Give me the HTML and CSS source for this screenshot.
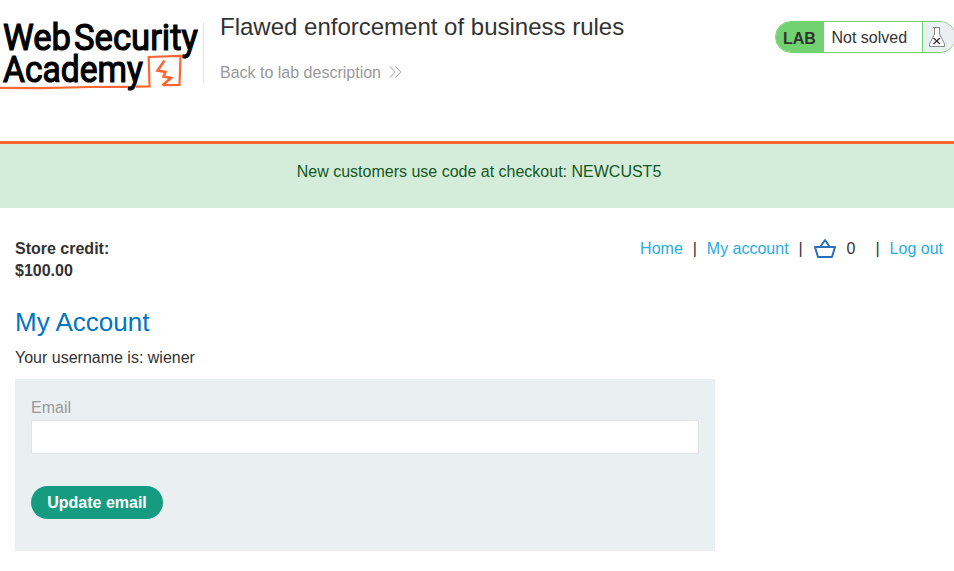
FILE: index.html
```html
<!DOCTYPE html>
<html lang="en">
<head>
<meta charset="utf-8">
<title>Flawed enforcement of business rules</title>
<link rel="stylesheet" href="styles.css">
</head>
<body>
<header class="lab-header">
  <svg class="logo" width="200" height="94" viewBox="0 0 200 94">
    <g class="logo-text">
      <text x="3" y="49.500" textLength="68" lengthAdjust="spacingAndGlyphs">Web</text>
      <text x="74" y="49.500" textLength="124" lengthAdjust="spacingAndGlyphs">Security</text>
      <text x="3" y="81.800" textLength="140" lengthAdjust="spacingAndGlyphs">Academy</text>
    </g>
    <g fill="none" stroke="#ff6633" stroke-width="2.200">
      <path d="M0 87.800 L40 88.200 L90 87 L128 86.800M136 86.600 L149.500 86.300 L148.700 57 L180.500 56 L179.500 84.800 L162.500 85.200"/>
      <path d="M164.500 60.500 L157.500 70.500 L165.500 72 L163.500 76.500 L171 78 L162.500 85.200" stroke-width="2.600"/>
    </g>
  </svg>
  <div class="title">
    <h2>Flawed enforcement of business rules</h2>
    <a class="back">Back to lab description
      <svg width="13" height="12" viewBox="0 0 13 12" fill="none" stroke="#999"><path d="M1 .5 6.2 6 1 11.5M6.500 .5 11.700 6 6.500 11.500"/></svg>
    </a>
  </div>
  <div class="status">
    <span class="lab">LAB</span>
    <p>Not solved</p>
    <span class="flask"><svg width="18" height="22" viewBox="0 0 18 22" fill="none"><path d="M5 1.500h7M6.500 2v6L1.500 18v2.500h15V18L11.500 8V2" fill="#fff" stroke="#888"/><path d="M5.500 12 12 18M12 12 5.500 18" stroke="#333" stroke-width="1.300"/></svg></span>
  </div>
</header>
<div class="banner">New customers use code at checkout: NEWCUST5</div>
<main>
  <div class="navigation">
    <strong>Store credit:<br>$100.00</strong>
    <nav>
      <a>Home</a><span>|</span><a>My account</a><span>|</span>
      <svg class="basket" width="24" height="22" viewBox="0 0 24 22" fill="none" stroke="#2b71b8" stroke-width="2"><path d="M2 9h20l-3 10H5zM7.500 8.500l4.500-6.500 4.500 6.500" stroke-linejoin="round"/></svg>
      <b>0</b><span>|</span><a>Log out</a>
    </nav>
  </div>
  <h1>My Account</h1>
  <p class="user">Your username is: wiener</p>
  <form class="account">
    <label for="email">Email</label>
    <input id="email" type="email">
    <button type="button">Update email</button>
  </form>
</main>
</body>
</html>
```
FILE: styles.css
```css
* { box-sizing: border-box; }
body {
  margin: 0;
  overflow: hidden;
  background: #fff;
  color: #333332;
  font: 16px/22px "Liberation Sans", Arial, sans-serif;
}
h1, h2, p { margin: 0; font-weight: 400; }
.lab-header {
  display: flex;
  align-items: flex-start;
  height: 144px;
  border-bottom: 3px solid #ff6633;
}
.logo { flex: none; overflow: visible; }
.logo-text {
  fill: #000;
  stroke: #000;
  stroke-width: 1.2px;
  font: 400 37px Roboto, sans-serif;
}
.title {
  flex: 1;
  height: 61px;
  margin: 22px 0 0 3px;
  padding-left: 16px;
  border-left: 1px solid #e2e2e2;
}
.title h2 { margin-top: -11px; font-size: 24px; line-height: 32px; }
.back {
  display: flex;
  align-items: center;
  gap: 8px;
  margin-top: 19px;
  color: #999;
}
.back svg { margin-top: -2px; }
.status {
  display: flex;
  flex: none;
  width: 181px;
  height: 32px;
  margin: 21px -2px 0 0;
  overflow: hidden;
  border: 1px solid #72d26f;
  border-radius: 16px;
  line-height: 32px;
}
.lab { width: 48px; padding-left: 7px; background: #72d26f; font-weight: 700; line-height: 34px; }
.status p { width: 98px; padding-left: 7.500px; line-height: 31px; }
.flask {
  display: flex;
  flex: 1;
  padding: 4px 0 0 5px;
  border-left: 1px solid #72d26f;
  background: #eaeff2;
}
.banner {
  height: 64px;
  padding: 17px 0 0 4px;
  background: #d4edda;
  color: #155724;
  text-align: center;
}
main { padding: 30px 11px 0 15px; }
.navigation { display: flex; justify-content: space-between; }
nav { display: flex; height: 22px; }
nav a { color: #29abe2; }
nav span { width: 4px; margin: 0 10px; color: #333; }
.basket { margin-right: 10px; }
nav b { width: 19px; font-weight: 400; }
h1 { margin-top: 23px; color: #0075c2; font-size: 26px; line-height: 34px; }
.user { margin-top: 8px; }
.account {
  width: 700px;
  height: 172px;
  margin-top: 10px;
  padding: 18px 16px;
  background: #eaeff2;
}
label { display: block; height: 23px; color: #999; }
input {
  display: block;
  width: 668px;
  height: 34px;
  padding: 0 8px;
  border: 1px solid #e2e4e6;
  background: #fff;
}
button {
  display: block;
  width: 132px;
  height: 33px;
  margin-top: 32px;
  padding: 0;
  border: 0;
  border-radius: 17px;
  background: #159c80;
  color: #fff;
  font: 700 16px "Liberation Sans", Arial, sans-serif;
}
```
